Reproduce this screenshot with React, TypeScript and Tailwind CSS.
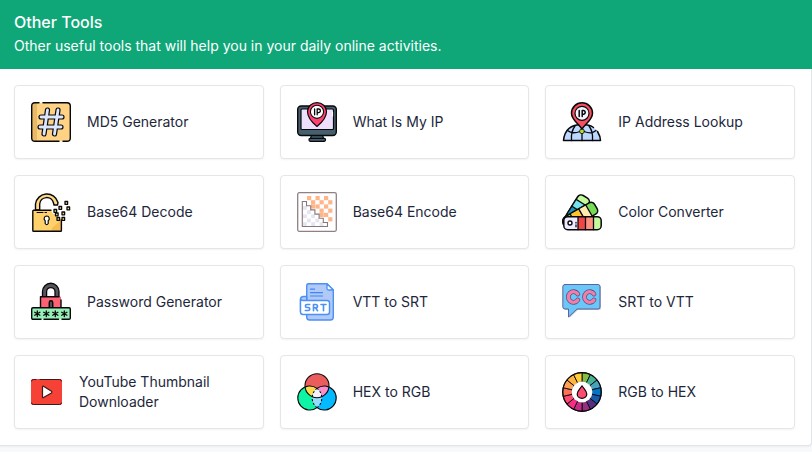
import type { ReactNode } from "react";

const INK = "#08080c";

function Icon({ children, narrow = false }: { children: ReactNode; narrow?: boolean }) {
  return (
    <svg
      viewBox={narrow ? "0 0 32 40" : "0 0 40 40"}
      className={narrow ? "h-10 w-8 shrink-0" : "size-10 shrink-0"}
      fill="none"
      strokeLinecap="round"
      strokeLinejoin="round"
      aria-hidden="true"
    >
      {children}
    </svg>
  );
}

function HashIcon() {
  const hash = "M16.5 8 L13 32 M27 8 L23.5 32 M10 15 H31 M9 25 H30";
  return (
    <Icon>
      <rect x="0.7" y="0.7" width="38.6" height="38.6" rx="3.5" fill="#ffd383" />
      <path d="M4 1 H6 V39 H4 Q1 39 1 36 V4 Q1 1 4 1 Z" fill="#eab968" />
      <path
        d="M12 0.7 H36 Q39.3 0.7 39.3 4 V36 Q39.3 39.3 36 39.3 H32 M28 39.3 H4 Q0.7 39.3 0.7 36 V4 Q0.7 0.7 4 0.7 H8"
        stroke={INK}
        strokeWidth="1.4"
      />
      <path d={hash} stroke={INK} strokeWidth="5.2" />
      <path d={hash} stroke="#dce6fd" strokeWidth="2.8" />
    </Icon>
  );
}

function MonitorIpIcon() {
  return (
    <Icon>
      <path d="M14.5 33 H25.5 L26.5 36.5 H13.5 Z" fill="#46606b" stroke={INK} strokeWidth="1.2" />
      <rect x="0.7" y="4" width="38.6" height="29.5" rx="3.5" fill="#46606b" stroke={INK} strokeWidth="1.4" />
      <rect x="4" y="7" width="32.5" height="20.5" rx="1" fill="#eee0fc" stroke={INK} strokeWidth="1.2" />
      <path d="M35.5 10 V14" stroke="#ffffff" strokeWidth="1.2" />
      <rect x="12" y="36.3" width="16.5" height="3" rx="1.2" fill="#46606b" stroke={INK} strokeWidth="1.2" />
      <path
        d="M20 24.5 C15 20.5 10.5 15 10.5 9.6 A9.5 9 0 0 1 29.5 9.6 C29.5 15 25 20.5 20 24.5 Z"
        fill="#ff416f"
        stroke={INK}
        strokeWidth="1.2"
      />
      <circle cx="20" cy="9.8" r="6.6" fill="#ffffff" stroke={INK} strokeWidth="1.1" />
      <path d="M17.6 7 V12.8 M20.2 12.8 V7 H21.6 A1.8 1.8 0 0 1 21.6 10.6 H20.2" stroke={INK} strokeWidth="1.3" />
    </Icon>
  );
}

function GlobeIpIcon() {
  return (
    <Icon>
      <path d="M1.5 38.5 C2.5 28 9 22.5 20 22.5 C31 22.5 37 28 38.5 38.5 Z" fill="#bdd8ff" />
      <path
        d="M35.5 29.5 C37 32 38.5 35 38.5 38.5 H1.5 C2.5 28 9 22.5 20 22.5 C25 22.5 29 23.5 31.5 25.5"
        stroke={INK}
        strokeWidth="1.5"
      />
      <path
        d="M20 29 V38.5 M13 24 C10 28 9 33 9.5 38.5 M27 24 C30 28 31 33 30.5 38.5 M5.5 28.5 C9 31.5 14 31 18 29.5 M22 29.5 C26 31 31 31.5 34 28.5"
        stroke={INK}
        strokeWidth="1.3"
      />
      <circle cx="20" cy="29.3" r="2.4" fill="#b5df35" stroke={INK} strokeWidth="0.8" />
      <path
        d="M20 27 C16.5 21.5 9.5 18 9.5 11.2 A10.5 10.4 0 0 1 30.5 11.2 C30.5 18 23.5 21.5 20 27 Z"
        fill="#f84f60"
        stroke={INK}
        strokeWidth="1.5"
      />
      <circle cx="20" cy="11.3" r="7" fill="#f3f6ff" stroke={INK} strokeWidth="1.2" />
      <path d="M17.2 8.5 V14.5 M20.2 14.5 V8.5 H21.8 A1.9 1.9 0 0 1 21.8 12.2 H20.2" stroke={INK} strokeWidth="1.5" />
    </Icon>
  );
}

const pixels: [number, number][] = [
  [34, 9.5], [28, 14.5], [36, 15], [23, 17.5], [31, 20], [24.5, 21], [26, 25.5], [31, 25.5],
];

function OpenLockIcon() {
  return (
    <Icon>
      <path
        d="M4.5 18 V12 A11.5 11.5 0 0 1 27 10.5 L26.5 13 H23 L22.5 11 A7 7 0 0 0 8.7 12 V18 Z"
        fill="#ffdb83"
        stroke={INK}
        strokeWidth="1.4"
      />
      <path d="M2 18.2 H20 L22 22 H25 L26 27 H30.5 V39.2 H2 Z" fill="#ffd16a" />
      <path d="M21 39.2 V36 L30.5 27.5 V39.2 Z" fill="#f6bc52" />
      <path d="M20 18.2 H2.6 Q1.8 18.2 1.8 19 V38.4 Q1.8 39.2 2.6 39.2 H29.6 Q30.4 39.2 30.4 38.4 V28" stroke={INK} strokeWidth="1.4" />
      <path d="M6 20.5 H12 M14 20.5 H15.5" stroke={INK} strokeWidth="1" />
      <path
        d="M15.7 24 A2.6 2.6 0 0 1 17.2 28.7 V31.5 Q15.7 33.8 14.2 31.5 V28.7 A2.6 2.6 0 0 1 15.7 24 Z"
        fill="#ffffff"
        stroke={INK}
        strokeWidth="1.2"
      />
      {pixels.map(([x, y]) => (
        <rect key={`${x}-${y}`} x={x} y={y} width="2.6" height="2.8" fill="#ffdb83" stroke={INK} strokeWidth="1.3" />
      ))}
    </Icon>
  );
}

const peach: [number, number][] = [
  [10, 4], [18.5, 4], [27, 4], [14, 8.2], [22.5, 8.2], [31.2, 8.2], [18.5, 12.4], [27, 12.4],
  [14, 12.4], [22.5, 16.6], [31.2, 16.6], [27, 20.8], [22.5, 20.8], [31.2, 25.2],
];
const lilac: [number, number][] = [
  [6, 14], [10, 18.2], [6, 22.4], [14.2, 22.4], [10, 26.6], [18.4, 26.6], [6, 30.2], [14.2, 30.2], [22.6, 30.2],
];

function AliasIcon() {
  return (
    <Icon>
      <rect x="0.7" y="0.7" width="38.6" height="38.6" rx="1.5" fill="#ffffff" stroke="#917f83" strokeWidth="1.3" />
      {peach.map(([x, y]) => (
        <rect key={`${x}-${y}`} x={x} y={y} width="4.2" height="4.2" fill="#ffb587" />
      ))}
      <path
        d="M5.3 9.5 H9.5 V13.7 H13.7 V17.9 H17.9 V22.1 H22.1 V26.3 H26.3 V30.5 H30.5 V34.5 H5.3 Z"
        fill="#ffffff"
      />
      {lilac.map(([x, y]) => (
        <rect key={`${x}-${y}`} x={x} y={y} width="3.8" height="3.8" fill="#e6e4f1" />
      ))}
      <path
        d="M5.3 9.5 H9.5 V13.7 H13.7 V17.9 H17.9 V22.1 H22.1 V26.3 H26.3 V30.5 H30.5 V34.5 H5.3 Z"
        stroke="#89777b"
        strokeWidth="1.1"
        strokeLinejoin="miter"
      />
    </Icon>
  );
}

function SwatchIcon() {
  return (
    <Icon>
      <g transform="rotate(-58 7 30)">
        <rect x="2" y="24" width="35" height="13" rx="4" fill="#c5fa9c" stroke={INK} strokeWidth="1.5" />
        <rect x="13" y="24" width="9" height="13" fill="#1a91b4" stroke={INK} strokeWidth="1.2" />
        <rect x="22" y="24" width="8" height="13" fill="#74e3ef" stroke={INK} strokeWidth="1.2" />
      </g>
      <g transform="rotate(-30 7 30)">
        <rect x="2" y="23.5" width="36" height="13" rx="4" fill="#77db55" stroke={INK} strokeWidth="1.5" />
        <rect x="12" y="23.5" width="10" height="13" fill="#ffc52f" stroke={INK} strokeWidth="1.2" />
        <rect x="22" y="23.5" width="8" height="13" fill="#ffeab0" stroke={INK} strokeWidth="1.2" />
      </g>
      <rect x="1.8" y="24.7" width="37.4" height="13" rx="4" fill="#eeeaff" />
      <path d="M16 24.7 H23.5 V37.7 H16 Z" fill="#f24545" />
      <path d="M23.5 24.7 H31.5 V37.7 H23.5 Z" fill="#ff9180" />
      <path d="M31.5 24.7 H36 Q39.2 24.7 39.2 28 V34 Q39.2 37.7 36 37.7 H31.5 Z" fill="#c5fa9c" />
      <rect x="1.8" y="24.7" width="37.4" height="13" rx="4" stroke={INK} strokeWidth="1.5" />
      <path d="M16 24.7 V37.7 M23.5 24.7 V37.7 M31.5 24.7 V37.7" stroke={INK} strokeWidth="1.3" />
      <circle cx="8" cy="31" r="2" fill="#ffffff" stroke={INK} strokeWidth="1.4" />
      <path d="M14 30.5 V31 M14 33 V34.8 M1 29 V32" stroke={INK} strokeWidth="1.3" />
    </Icon>
  );
}

function PasswordIcon() {
  return (
    <Icon>
      <path
        d="M11.5 15 V9.5 A8.2 8.2 0 0 1 28 9.5 V15 H24 V9.8 A4.2 4.2 0 0 0 15.6 9.8 V15 Z"
        fill="#59545b"
        stroke={INK}
        strokeWidth="1.3"
      />
      <path d="M9.5 14.7 H30 V26 H9.5 Z" fill="#ff6272" />
      <path d="M9.5 26 V14.7 H28 M30 18 V26" stroke={INK} strokeWidth="1.4" />
      <path d="M18.3 26 V20.5 A1.7 1.7 0 0 1 21.7 20.5 V26 Z" fill="#59545b" stroke={INK} strokeWidth="1.5" />
      <rect x="0.7" y="25.7" width="38.6" height="11.6" rx="1.5" fill="#96efb4" />
      <path
        d="M10 37.3 H2 Q0.7 37.3 0.7 36 V27 Q0.7 25.7 2 25.7 H38 Q39.3 25.7 39.3 27 V36 Q39.3 37.3 38 37.3 H31 M27.5 37.3 H13"
        stroke={INK}
        strokeWidth="1.4"
      />
      {[6.3, 15.3, 24.3, 33.3].map((x) => (
        <path
          key={x}
          transform={`translate(${x} 31.8)`}
          d="M0 -2.8 V2.8 M-2.6 -1.5 L2.6 1.5 M2.6 -1.5 L-2.6 1.5"
          stroke={INK}
          strokeWidth="1.3"
        />
      ))}
    </Icon>
  );
}

function SrtFileIcon() {
  return (
    <Icon>
      <path d="M11.5 1.7 H30 L36.3 8 V35 Q36.3 38 33.5 38 H12.5 Q9.7 38 9.7 35 V4 Q9.7 1.7 11.5 1.7 Z" fill="#b0c9f7" stroke="#4b90f7" strokeWidth="1.4" />
      <path d="M30 1.7 V6.5 Q30 8 31.5 8 H36.3 Z" fill="#ffffff" stroke="#4b90f7" strokeWidth="1.3" />
      <path d="M13.5 7.2 H17.5 M13.5 10.7 H25.5 M13.5 14 H25.5" stroke="#3b88fa" strokeWidth="1.2" />
      <path d="M9.7 14.5 H6.5 Q3.5 14.5 3.5 17.5 V29.5 L7 32 H9.7 Z" fill="#b0c9f7" stroke="#4b90f7" strokeWidth="1.4" />
      <path d="M6 18.5 H30 Q32.5 18.5 32.5 21 V30 Q32.5 32.5 30 32.5 H6 Q3.5 32.5 3.5 30 V17 Q3.5 18.5 6 18.5 Z" fill="#ffffff" stroke="#4b90f7" strokeWidth="1.4" />
      <path
        d="M12.7 22.5 H10 Q8.4 22.5 8.4 24 Q8.4 25.5 10 25.5 H11.2 Q12.8 25.5 12.8 27 Q12.8 28.5 11.2 28.5 H8.3 M16.5 28.7 V22.5 H18.7 Q20.5 22.5 20.5 24.2 Q20.5 25.8 18.7 25.8 H16.5 M18.5 25.8 L20.6 28.7 M24 22.5 H29 M26.5 22.5 V28.7"
        stroke="#4b90f7"
        strokeWidth="1.6"
      />
    </Icon>
  );
}

function CaptionIcon() {
  const c = "M15.8 12 A5.2 5.3 0 1 0 15.8 18 M32 12 A5.2 5.3 0 1 0 32 18";
  const bubble = "M3 2.5 H36 Q38 2.5 38 4.5 V25 Q38 27 36 27 H15 L6.5 35 V27 H3 Q0.8 27 0.8 25 V4.5 Q0.8 2.5 3 2.5 Z";
  return (
    <Icon>
      <path d={bubble} transform="translate(1 1)" fill="#c5c9d2" />
      <path d={bubble} fill="#6bc7f7" stroke="#515792" strokeWidth="0.9" />
      <path d={c} stroke="#515792" strokeWidth="4.8" />
      <path d={c} stroke="#f57fa4" strokeWidth="3.2" />
    </Icon>
  );
}

function PlayIcon() {
  return (
    <Icon narrow>
      <rect x="0" y="7" width="31" height="26" rx="2" fill="#f64236" />
      <path d="M0.5 9 Q0.5 7.5 2.5 7.5 H5 M9 7.5 H28.5 Q30.5 7.5 30.5 9 M0.5 31 Q0.5 32.5 2.5 32.5 H28.5 Q30.5 32.5 30.5 31" stroke="#40191b" strokeWidth="1" />
      <path d="M11.5 15 V25 Q11.5 26 12.5 25.5 L20.5 21 Q21.3 20 20.5 19.2 L12.5 14.2 Q11.5 14 11.5 15 Z" fill="#ffffff" stroke="#40191b" strokeWidth="1.2" />
    </Icon>
  );
}

function VennIcon() {
  return (
    <Icon>
      <circle cx="20" cy="13.7" r="12" fill="#eb5d5d" />
      <circle cx="12.8" cy="26" r="12" fill="#0df4a5" />
      <circle cx="27.2" cy="26" r="12" fill="#03b9ff" />
      <path d="M8.2 15 A12 12 0 0 1 20 16.5 A12 12 0 0 0 14.8 24.5 A12 12 0 0 1 8.2 15 Z" fill="#ffda4f" />
      <path d="M31.8 15 A12 12 0 0 0 20 16.5 A12 12 0 0 1 25.2 24.5 A12 12 0 0 0 31.8 15 Z" fill="#ff8cca" />
      <path d="M15.2 25 Q20 27 24.8 25 Q25 31.5 20 35.5 Q15 31.5 15.2 25 Z" fill="#94dcf8" />
      <path d="M20 16.5 A12 12 0 0 1 24.9 24.7 Q20 26.7 15.1 24.7 A12 12 0 0 1 20 16.5 Z" fill="#f4f2f8" />
      <circle cx="20" cy="13.7" r="12" stroke={INK} strokeWidth="1.1" />
      <path
        d="M20 16.4 A12 12 0 1 0 20 35.6 M20 16.4 A12 12 0 1 1 20 35.6"
        stroke={INK}
        strokeWidth="1.1"
      />
      <path
        d="M20 16.4 A12 12 0 0 1 20 35.6 M20 16.4 A12 12 0 0 0 20 35.6"
        stroke={INK}
        strokeWidth="1.1"
        strokeLinecap="butt"
        strokeDasharray="2 2"
      />
    </Icon>
  );
}

const wheelColors = [
  "#83bd43", "#49b295", "#46a3bd", "#0075cb", "#1759aa", "#572f80",
  "#972f80", "#c12d83", "#f52d85", "#ff496e", "#ff7154", "#ffa153", "#ffb43f", "#ffcd3b",
];

function wheelPoint(radius: number, index: number) {
  const angle = (index / wheelColors.length) * Math.PI * 2 - Math.PI / 2;
  return `${20 + radius * Math.cos(angle)} ${20 + radius * Math.sin(angle)}`;
}

function WheelIcon() {
  return (
    <Icon>
      {wheelColors.map((color, i) => (
        <path
          key={color}
          d={`M${wheelPoint(10.4, i)} L${wheelPoint(19.3, i)} A19.3 19.3 0 0 1 ${wheelPoint(19.3, i + 1)} L${wheelPoint(10.4, i + 1)} Z`}
          fill={color}
          stroke={INK}
          strokeWidth="0.9"
        />
      ))}
      <circle cx="20" cy="20" r="19.3" stroke={INK} strokeWidth="1.2" />
      <circle cx="20" cy="20" r="10.4" fill="#ffffff" />
      <path d="M20 13.8 C22 17 24.8 19 24.8 22 A4.8 4.4 0 0 1 15.2 22 C15.2 19 18 17 20 13.8 Z" fill="#ff4b70" stroke={INK} strokeWidth="1.2" />
    </Icon>
  );
}

const tools: { name: string; icon: ReactNode }[] = [
  { name: "MD5 Generator", icon: <HashIcon /> },
  { name: "What Is My IP", icon: <MonitorIpIcon /> },
  { name: "IP Address Lookup", icon: <GlobeIpIcon /> },
  { name: "Base64 Decode", icon: <OpenLockIcon /> },
  { name: "Base64 Encode", icon: <AliasIcon /> },
  { name: "Color Converter", icon: <SwatchIcon /> },
  { name: "Password Generator", icon: <PasswordIcon /> },
  { name: "VTT to SRT", icon: <SrtFileIcon /> },
  { name: "SRT to VTT", icon: <CaptionIcon /> },
  { name: "YouTube Thumbnail Downloader", icon: <PlayIcon /> },
  { name: "HEX to RGB", icon: <VennIcon /> },
  { name: "RGB to HEX", icon: <WheelIcon /> },
];

export default function App() {
  return (
    <div className="min-h-screen bg-[#f7f9fb] font-['Inter','Liberation_Sans',sans-serif] text-sm text-[#1d273b]">
      <section className="rounded-br border-r border-b border-[#e2e5e8] bg-white shadow-xs">
        <header className="-mr-px bg-[#0fa678] px-3.5 pt-3 pb-[13px] text-white">
          <h2 className="text-base leading-5 font-medium">Other Tools</h2>
          <p className="mt-1 leading-5">Other useful tools that will help you in your daily online activities.</p>
        </header>
        <ul className="grid grid-cols-3 gap-4 py-4 pr-4 pl-3.5">
          {tools.map(({ name, icon }) => (
            <li key={name}>
              <a
                href="#"
                className="flex h-full items-center gap-4 rounded border border-[#e4e6e8] bg-white p-4 leading-5 shadow-xs"
              >
                {icon}
                <span>{name}</span>
              </a>
            </li>
          ))}
        </ul>
      </section>
    </div>
  );
}
